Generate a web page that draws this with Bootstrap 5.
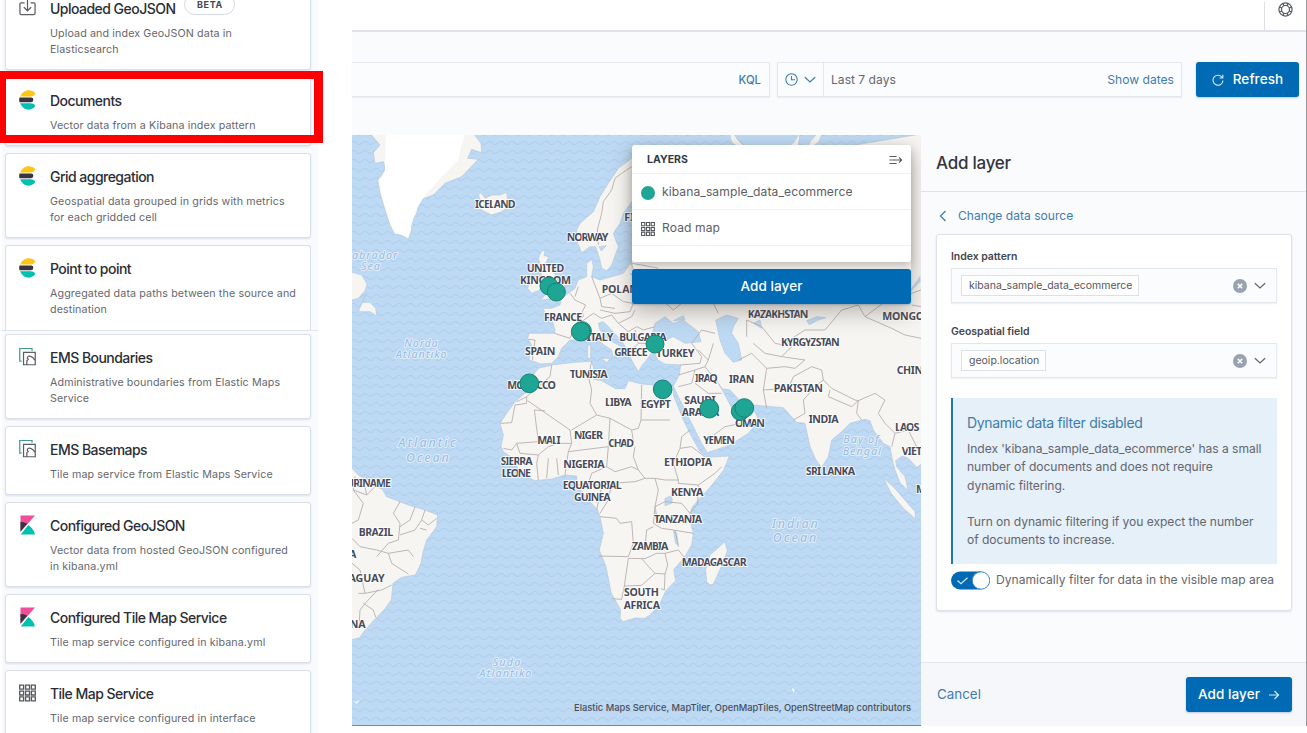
<!DOCTYPE html>
<html lang="en">
<head>
<meta charset="utf-8">
<title>Maps - Kibana</title>
<meta name="viewport" content="width=device-width, initial-scale=1">
<link href="https://cdn.jsdelivr.net/npm/bootstrap@5.3.0/dist/css/bootstrap.min.css" rel="stylesheet">
<style>
body{font-family:Inter,"Liberation Sans",sans-serif;color:#343741;background:#fff;height:733px;overflow:hidden;font-size:12.1px;line-height:1.5}
svg{display:block;flex:none}
.source-list{width:316px;height:733px;padding:0 5px 0 3px;margin-left:2px;background:#f9fafd}
.source-card{width:306px;margin-bottom:7px;border:1px solid #d9deea;border-radius:3px;box-shadow:0 1px 2px rgba(90,110,160,.18);padding:13px 8px 0 13px;background:#fff;gap:14px;height:69px;position:relative}
.source-card.tall{height:85px}
.source-card h2{font-size:14px;font-weight:500;line-height:20px;margin:0 0 6px;letter-spacing:-.53px;color:#2b2d35;white-space:nowrap}
.source-card p{font-size:10.7px;line-height:16.2px;letter-spacing:.12px;margin:0;color:#65676e;white-space:nowrap;position:relative;top:.6px}
.source-icon{width:17px;height:20px;margin-top:-1px}
.beta{font-size:9px;font-weight:700;letter-spacing:.6px;border:1px solid #d3dae6;border-radius:11px;width:51px;height:21px;line-height:20px;text-align:center;color:#444750;margin:-5px 0 0 9px}
.cut-off{height:85px;border-bottom:0;border-radius:3px 3px 0 0;margin-bottom:0;box-shadow:none}
.list-break{height:4px;margin:0 -5px 0 -3px;border-top:1px solid #dfe3ee}
.highlight{position:absolute;left:-6px;top:-7px;width:323px;height:72px;border:solid #f00;border-width:8px 9px 8px 6px;z-index:3}
.app{width:955px;height:726px;margin-left:34px;background:#fafbfd;border-right:1px solid #98999c;border-bottom:1px solid #7d8693}
.topbar{height:32px;background:#fff;border-bottom:2px solid #e0e1ea}
.help{width:42px;height:28px;border-left:1px solid #dcdee4;margin-top:2px;padding:0 0 0 13px}
.filters{height:103px;padding:30px 7px 0 0}
.field{height:35px;background:#fbfcfd;border:1px solid #e4e7ed;box-shadow:0 1px 1px rgba(60,70,100,.07)}
.query{width:418px;border-left:0;padding-right:8px;margin-right:7px;font-size:11.3px}
.dates{width:405px;margin-right:14px;padding-right:7px}
.quick{width:46px;height:33px;border-right:1px solid #e4e7ed;padding-left:7px;gap:6px}
.tlink{color:#3f7cae}
.dates span,.query{padding-top:1px}
.grey{color:#65676e}
.btn-k{background:#006bb4;color:#fff;border:0;border-radius:3px;height:35px;font-size:13.5px;font-weight:500;padding:0;box-shadow:0 1px 2px rgba(0,60,120,.25);letter-spacing:.1px}
.btn-k:hover{background:#005c9b;color:#fff}
.map{width:569px;height:590px;overflow:hidden}
.country{font:bold 32px "Noto Sans","Open Sans",sans-serif;fill:#484a59;stroke:#fff;stroke-opacity:.85;stroke-width:6px;stroke-linejoin:round;paint-order:stroke}
.sea{font:italic 500 32px "Noto Sans","Open Sans",sans-serif;fill:#9cbfe1;stroke:#e9f2fb;stroke-width:5px;stroke-linejoin:round;paint-order:stroke}
.ocean{font-size:37px}
.layers{position:absolute;left:280px;top:10px;width:279px;border-radius:3px;box-shadow:0 8px 22px rgba(80,70,60,.38)}
.layer-panel{height:117px;background:#fff;border-radius:3px;box-shadow:0 4px 8px rgba(60,60,60,.3)}
.layer-head{height:29px;padding:2px 8px 0 15px;border-bottom:1px solid #f1f2f5;font-size:10.5px;font-weight:700}
.layer-line{height:36px;padding:2px 0 0 9px;border-bottom:1px solid #f1f2f5;gap:7px;color:#5c5e66;letter-spacing:.08px}
.layer-dot{width:14px;height:14px;border-radius:50%;background:#1ea593}
.credit{position:absolute;right:10px;bottom:9px;font-size:9.3px;line-height:16px;font-weight:500;color:#4a4e5c;white-space:nowrap}
.flyout{width:385px;background:#fafbfd}
.flyout-head{height:57px;border-bottom:1px solid #dfe2e9;padding:2px 0 0 15px;font-size:17px;font-weight:500;color:#33353d;letter-spacing:-.25px}
.back{height:42px;padding:15px 0 0 18px;gap:11px}
.form-panel{width:356px;height:377px;margin-left:15px;padding:13px 14px 0;background:#fff;border:1px solid #dde1ea;border-radius:3px;box-shadow:0 1px 2px rgba(60,70,100,.15)}
.form-panel label{display:block;font-size:10.5px;font-weight:600;line-height:18px;margin-bottom:2px;color:#44464e;letter-spacing:-.05px}
.combo{height:35px;margin-bottom:20px;padding:0 10px 0 9px;gap:7px;color:#62656e}
.pill{border:1px solid #dde0e7;background:#fff;height:21px;line-height:19px;padding:0 6px 0 7px;font-size:10.5px;color:#54565e}
.note{height:166px;border-left:2px solid #2077b8;background:#e6f0f8;padding:14px 0 0 14px;color:#63666f;font-size:12.1px;letter-spacing:-.05px;line-height:18.3px;white-space:nowrap;margin-top:1px}
.note h3{font-size:14px;line-height:21px;color:#3f7cae;font-weight:400;margin:0 0 7px;letter-spacing:-.32px}
.note p{margin:0 0 18.3px}
.switch-row{gap:6px;margin-top:7px;color:#65676e}
.foot{height:64px;margin-top:51px;padding:0 14px 0 16px;background:#f6f7fb;border-top:1px solid #e2e5ec}
</style>
</head>
<body class="d-flex">
<svg width="0" height="0" class="position-absolute">
  <symbol id="elastic" viewBox="0 0 17 20"><path fill="#fec514" d="M1.300 6.500C2.800 2.600 6 .3 9.800.3c2.600 0 5 1 6.600 2.900-.8 2-2.400 3.300-4.900 3.300z"/><path fill="#343741" d="M.5 7.400h11.500a2.400 2.400 0 0 1 0 4.800H.5a9 9 0 0 1 0-4.800z"/><path fill="#00bfb3" d="M1.300 13.300h10.500c2.200 0 3.700 1 4.600 2.800a9 9 0 0 1-6.600 3.600c-3.900 0-7.100-2.500-8.500-6.400z"/></symbol>
  <symbol id="kib" viewBox="0 0 17 20"><path fill="#f04e98" d="M1.500.5H16L1.500 17z"/><path fill="#343741" d="M1.500 7c2.500 0 4.800.6 6.700 1.800L1.500 16.500z"/><path fill="#00bfb3" d="M9.300 10C12.500 12 15 15.400 16 19.500H1.800z"/></symbol>
  <symbol id="ems" viewBox="0 0 18 20"><path fill="none" stroke="#3d9b90" stroke-width="1.300" d="M2.800 14.300H.8V1h13v2.300"/><path fill="none" stroke="#5b5d64" stroke-width="1.300" d="M4.800 5h12.400v13.200H4.800zM8.300 18v-4l1.500-1.500-1-1c0-2.200 1.800-3 3.500-2.200 2 .5 3.200 1.500 4.500 4.200"/></symbol>
  <symbol id="tiles" viewBox="0 0 17 17"><path fill="none" stroke="#55575f" stroke-width="1.300" d="M.7.7h3.900v3.900H.7zM6.600.7h3.900v3.900H6.600zM12.400.7h3.900v3.900h-3.900zM.7 6.600h3.900v3.900H.7zM6.600 6.600h3.900v3.900H6.600zM12.400 6.600h3.900v3.900h-3.900zM.7 12.400h3.900v3.900H.7zM6.600 12.400h3.900v3.900H6.600zM12.400 12.400h3.900v3.900h-3.900z"/></symbol>
  <symbol id="down" viewBox="0 0 12 8"><path fill="none" stroke="currentColor" stroke-width="1.200" stroke-linecap="round" d="M1.200 1.500 6 6l4.800-4.500"/></symbol>
  <symbol id="clear" viewBox="0 0 14 14"><circle cx="7" cy="7" r="7" fill="#98a2b3"/><path stroke="#fff" stroke-width="1.600" d="m4.800 4.800 4.400 4.400m0-4.400L4.800 9.200"/></symbol>
</svg>

<aside class="source-list">
  <div class="source-card tall d-flex" style="margin-top:-15px"><svg class="source-icon" viewBox="0 0 18 20"><path fill="none" stroke="#5b5d64" stroke-width="1.300" stroke-linecap="round" d="M5.500 4.500H2.200Q1 4.500 1 6v9.500Q1 17 2.500 17h13q1.500 0 1.500-1.500V6q0-1.500-1.300-1.500h-3M9 1v11.500M5.500 9.500 9 13l3.500-3.500"/></svg><div><div class="d-flex"><h2>Uploaded GeoJSON</h2><span class="beta">BETA</span></div><p>Upload and index GeoJSON data in<br>Elasticsearch</p></div></div>
  <div class="source-card d-flex"><svg class="source-icon"><use href="#elastic"/></svg><div><h2>Documents</h2><p>Vector data from a Kibana index pattern</p></div><div class="highlight"></div></div>
  <div class="source-card tall d-flex"><svg class="source-icon"><use href="#elastic"/></svg><div><h2>Grid aggregation</h2><p>Geospatial data grouped in grids with metrics<br>for each gridded cell</p></div></div>
  <div class="source-card cut-off d-flex"><svg class="source-icon"><use href="#elastic"/></svg><div><h2>Point to point</h2><p>Aggregated data paths between the source and<br>destination</p></div></div>
  <div class="list-break"></div>
  <div class="source-card tall d-flex"><svg class="source-icon"><use href="#ems"/></svg><div><h2>EMS Boundaries</h2><p>Administrative boundaries from Elastic Maps<br>Service</p></div></div>
  <div class="source-card d-flex"><svg class="source-icon"><use href="#ems"/></svg><div><h2>EMS Basemaps</h2><p>Tile map service from Elastic Maps Service</p></div></div>
  <div class="source-card tall d-flex"><svg class="source-icon"><use href="#kib"/></svg><div><h2>Configured GeoJSON</h2><p>Vector data from hosted GeoJSON configured<br>in kibana.yml</p></div></div>
  <div class="source-card d-flex"><svg class="source-icon"><use href="#kib"/></svg><div><h2>Configured Tile Map Service</h2><p>Tile map service configured in kibana.yml</p></div></div>
  <div class="source-card d-flex"><svg class="source-icon"><use href="#tiles"/></svg><div><h2>Tile Map Service</h2><p>Tile map service configured in interface</p></div></div>
</aside>

<main class="app">
  <header class="topbar d-flex justify-content-end"><div class="help"><svg width="15" height="15" viewBox="0 0 15 15"><g fill="none" stroke="#555861" stroke-width="1.200"><circle cx="7.500" cy="7.500" r="6.600"/><circle cx="7.500" cy="7.500" r="4"/><path d="M5 1.500 6 4M10 1.500 9 4M5 13.500 6 11M10 13.500 9 11M1.500 5 4 6M1.500 10 4 9M13.500 5 11 6M13.500 10 11 9"/></g></svg></div></header>
  <section class="filters d-flex">
    <div class="field query d-flex align-items-center justify-content-end tlink fw-medium">KQL</div>
    <div class="field dates d-flex align-items-center">
      <div class="quick d-flex align-items-center tlink"><svg width="13" height="13" viewBox="0 0 13 13"><path fill="none" stroke="currentColor" stroke-width="1.100" d="M6.500.8a5.700 5.700 0 1 1 0 11.400 5.700 5.700 0 0 1 0-11.400zM6.500 3v3.700H10"/></svg><svg width="12" height="8"><use href="#down"/></svg></div>
      <span class="grey" style="padding-left:7px">Last 7 days</span><span class="tlink ms-auto">Show dates</span>
    </div>
    <button class="btn btn-k d-flex align-items-center justify-content-center" style="width:103px;gap:9px"><svg width="12" height="12" viewBox="0 0 12 12"><path fill="none" stroke="#d5e7f4" stroke-width="1.100" d="M10.500 4A5 5 0 1 0 11 6.500M10.800.8V4H7.500"/></svg>Refresh</button>
  </section>
  <div class="d-flex">
    <section class="map position-relative">
      <svg width="569" height="590" viewBox="21 15 1707 1770">
        <defs><pattern id="waves" width="34" height="27" patternUnits="userSpaceOnUse"><path d="M0 12q8.500 9 17 0t17 0" fill="none" stroke="#aecdec" stroke-width="3"/></pattern></defs>
        <path fill="#bdd9f3" d="M0 0h1760v1800H0z"/><path fill="url(#waves)" d="M0 0h1760v1800H0z"/>
        <g fill="#f7f5f2" stroke="#b5c9dd" stroke-width="2" stroke-linejoin="round">
          <path d="M75 10 105 45 85 68 90 100 115 95 122 120 98 150 105 190 120 240 133 280 148 312 170 315 190 328 200 300 198 280 215 250 225 210 265 195 300 160 350 140 400 88 368 85 380 58 410 68 408 40 385 10z"/>
          <path d="M15 425 50 435 66 462 60 482 40 505 15 512zM65 487 52 517 75 517 92 535 95 557 75 545 40 545z"/>
          <path d="M400 195 408 188 420 205 440 195 465 195 485 187 487 208 496 225 470 245 440 255 415 243 398 232 410 217z"/>
          <path d="M590 362h10l-3 15 15 3-12 22 25 20 15 33 20 10-5 25-15 15-40 3-15 4 20-22-5-30-10-20-5-40-5-15zM555 450 575 440 590 455 585 480 560 490 548 475z"/>
          <path d="M695 300 705 280 745 245 765 200 790 160 820 115 860 85 900 60 960 50 1165 60 1400 55 1500 50 1740 10V995L1715 1012 1690 985 1672 978 1652 992 1655 1010 1680 1040 1690 1082 1665 1058 1650 1020 1642 990 1635 950 1615 940 1585 900 1575 872 1560 868 1515 880 1490 905 1460 930 1450 980 1430 1012 1413 990 1395 950 1380 880 1355 877 1315 833 1225 825 1185 812 1155 780 1130 776 1145 805 1165 842 1192 848 1225 838 1237 860 1232 884 1210 910 1155 945 1087 968 1070 940 1040 880 1000 800 985 768 1003 735 1007 705 960 702 938 690 925 660 905 690 892 705 880 725 865 700 850 670 835 640 800 600 775 575 760 580 765 600 790 630 830 650 820 662 805 683 800 660 770 640 750 620 735 598 690 630 675 630 650 655 640 680 620 700 585 702 570 695 552 690 560 645 548 625 552 610 628 610 630 600 620 565 600 550 595 535 620 535 645 525 650 505 670 490 690 475 700 450 725 440 725 400 740 388 745 410 740 440 765 450 800 440 835 430 860 395 868 300 860 215 835 250 825 280 805 310 812 330 820 350 800 405 785 422 770 415 765 390 752 350 735 350 710 368 698 340z"/>
          <path d="M580 715 620 705 690 697 740 694 750 730 745 748 770 752 812 776 840 776 850 752 890 762 930 765 985 770 985 795 1015 870 1040 920 1065 965 1087 982 1153 978 1135 1022 1095 1072 1042 1130 1032 1160 1045 1210 1040 1245 1018 1282 986 1319 992 1352 962 1383 943 1425 915 1455 899 1465 870 1464 833 1475 825 1463 827 1440 799 1390 783 1310 763 1260 775 1210 765 1160 758 1140 735 1115 695 1065 695 1038 660 1035 620 1047 570 1052 545 1040 520 1017 500 982 475 965 468 950 475 915 465 880 485 850 510 815 545 785 560 740z"/>
          <path d="M1140 1235 1147 1262 1135 1296 1115 1341 1105 1362 1095 1365 1085 1355 1082 1319 1095 1274 1110 1262z"/>
          <path d="M15 1008 40 1035 110 1075 125 1100 190 1125 240 1140 278 1155 275 1190 245 1230 235 1262 228 1300 211 1335 170 1342 144 1360 139 1409 120 1436 83 1475 60 1500 44 1523 15 1530z"/>
          <path d="M1615 1045 1645 1070 1710 1145 1712 1167 1675 1135 1640 1092zM728 645h9v40h-9zM768 684l26 2-8 12zM1166 10q12 25 35 40h-20q-30-10-25-40zM1365 10h-25q-5 25-30 38h50zM1432 10l-10 25-20 15h-20l35-40zM1724 1165l10 8-4 10z"/>
        </g>
        <path fill="#fff" d="M122 10 120 120 103 155 110 195 135 280 150 308 190 322 210 245 240 195 310 120 340 90 350 45 362 10zM22 1710l10 6 13-5-10 10z"/>
        <path fill="#bdd9f3" d="M1172 10h190q-6 25-30 40h-125q-24-15-35-40zM1385 10h22l-15 38h-22z"/>
        <g fill="#bdd9f3" stroke="#b5c9dd" stroke-width="2">
          <path d="M920 620 930 580 960 560 985 580 1015 570 1060 605 1068 635 1020 640 985 620 950 635zM985 572l30-15 5 12zM1112 570 1145 555 1180 565 1165 590 1160 610 1180 640 1190 690 1165 697 1140 670 1125 630zM1385 572l30-12 28 3-25 8-25 13zM1225 580l20-10 5 25zM960 1105l20-8 2 22-22 8zM985 1200l10 10 5 35-8-5zM762 350l22-3-15 16zM1690 490l35-35v-15zM930 1130l8 35h-8z"/>
        </g>
        <g fill="none" stroke="#b8b2b1" stroke-width="2.800" stroke-linejoin="round">
          <path d="M860 110 830 130 810 145 800 180 775 215 770 250 757 300 760 345M550 628 570 630 562 690M628 610 675 625 700 570 715 560 712 545 722 525 690 510 675 490M700 470 690 500M710 575 745 550 770 565 800 555M740 440 765 505 800 490 835 515 865 520 855 545 810 550 765 540M765 505 770 530 810 535M865 520 890 500 880 450 855 430M800 555 820 580 860 560 870 540M820 580 850 605 875 590 895 600 930 590M860 400 890 405 940 415M870 600 880 640 860 660M880 640 930 640M890 500 940 500 985 540 1010 520"/>
          <path d="M860 400 870 440 920 450 960 440M940 500 945 460 985 500M1095 480 1100 510 1120 550M1040 640 1070 600 1110 610M1040 640 1070 680 1065 700 1005 705M1060 660 1090 690 1105 640M1205 620 1205 570 1250 590 1290 640 1340 650 1310 680 1260 670 1225 640M1180 690 1220 670 1265 715 1255 780M1340 650 1325 635 1380 600 1440 600 1490 540 1540 525 1560 560 1640 595 1680 615 1728 625M1310 680 1380 690 1350 715 1320 710 1265 715M1560 560 1640 500 1700 490 1728 480"/>
          <path d="M1255 780 1265 835M1255 780 1330 775 1345 740 1400 710 1430 720 1435 750 1460 775 1530 810 1540 812 1590 790 1620 810 1600 850 1620 880M1345 870 1380 850 1375 810 1410 770 1435 750M1455 780 1450 800 1520 830 1540 812M1540 812 1535 850 1550 870M1620 880 1650 910 1690 900 1720 960M1650 910 1640 950M1690 900 1720 880M1000 735 1050 720 1040 760 1000 770M1050 720 1080 710 1120 760 1130 776M1050 760 1090 790 1130 790M1100 920 1140 890 1190 880 1205 850M1180 812 1185 848M1080 710 1090 690"/>
          <path d="M620 705 615 740 580 770 545 800 515 815M545 800 545 820 510 825 500 878 465 880M548 812 675 900 680 940 640 940 580 935 568 840 600 842M740 694 730 740 740 780 735 820 755 855 680 900M755 855 795 865 860 900 865 935M890 765 888 870 975 870M888 870 880 895 860 900M795 865 790 950 670 965 680 940M580 935 515 940 500 960 475 955M515 940 525 970 580 975 610 950 640 940M580 975 575 1000 580 1050M610 985 605 1045M635 985 640 1035M670 965 660 1035M790 950 785 1010 740 1030 730 1060 695 1065M785 1010 810 1025 860 1010 880 1020 865 980 870 950M730 1060 770 1070 755 1140M880 1020 900 1045 870 1055 800 1060 790 1110 765 1150"/>
          <path d="M1035 900 1010 920 1005 955 985 1000 1000 1050 960 1050 930 1045 900 1045M1005 955 1040 950 1085 985M1130 1010 1110 1030 1060 1065 1000 1060 1000 1050M1060 1065 1058 1120 1035 1150M930 1045 940 1080 930 1130 960 1115 1010 1120 1035 1150M930 1130 925 1180 950 1195 985 1200 1045 1210M765 1160 815 1165 825 1180 860 1175 865 1240 900 1250 905 1200 925 1190M865 1240 850 1280 760 1278M850 1285 900 1286 935 1270 960 1270 1000 1260 1018 1282M850 1285 838 1368 890 1366 930 1330 960 1332 958 1380 948 1376M890 1286 920 1320 930 1330M960 1270 968 1305 960 1332M838 1368 830 1408 800 1406M990 1200 1000 1250"/>
          <path d="M30 1040 25 1080 65 1095 60 1070M65 1095 90 1070 110 1075M25 1080 55 1120 40 1170 21 1180M165 1115 145 1150 165 1180 160 1230 130 1240 95 1280M210 1130 195 1170 165 1190M240 1140 230 1170 250 1185 275 1165M230 1170 210 1200 165 1215M245 1200 225 1195M95 1260 130 1270 190 1260 205 1280M130 1270 140 1300 190 1332M21 1300 45 1320 60 1390 40 1390M60 1390 110 1380 140 1365M100 1378 65 1415 45 1440 42 1490M55 1420 85 1440 92 1462M21 1225 45 1250 95 1260M1700 525 1728 530"/>
        </g>
        <g class="country">
          <text x="390" y="233" textLength="122">ICELAND</text><text x="665" y="333" textLength="125">NORWAY</text><text x="838" y="274">FINLAND</text>
          <text x="545" y="425" textLength="113">UNITED</text><text x="525" y="463" textLength="153">KINGDOM</text><text x="770" y="489" textLength="132">POLAND</text>
          <text x="597" y="574" textLength="115">FRANCE</text><text x="725" y="632" textLength="80">ITALY</text><text x="823" y="632" textLength="142">BULGARIA</text>
          <text x="540" y="675" textLength="91">SPAIN</text><text x="808" y="679" textLength="100">GREECE</text><text x="933" y="680" textLength="115">TURKEY</text>
          <text x="1208" y="565" textLength="182">KAZAKHSTAN</text><text x="1612" y="571" textLength="175">MONGOLIA</text><text x="1308" y="647" textLength="176">KYRGYZSTAN</text><text x="1655" y="731" textLength="100">CHINA</text>
          <text x="487" y="777" textLength="146">MOROCCO</text><text x="674" y="745" textLength="114">TUNISIA</text><text x="780" y="828" textLength="80">LIBYA</text><text x="887" y="835" textLength="91">EGYPT</text>
          <text x="1050" y="755" textLength="68">IRAQ</text><text x="1152" y="759" textLength="76">IRAN</text><text x="1286" y="787" textLength="148">PAKISTAN</text><text x="1391" y="878" textLength="90">INDIA</text>
          <text x="1018" y="823" textLength="94">SAUDI</text><text x="1010" y="859" textLength="112">ARABIA</text><text x="1170" y="892" textLength="90">OMAN</text><text x="1075" y="943" textLength="95">YEMEN</text>
          <text x="1650" y="903" textLength="73">LAOS</text><text x="1670" y="976" textLength="132">VIETNAM</text><text x="1383" y="1034" textLength="147">SRI LANKA</text><text x="1713" y="1089">MALAYSIA</text>
          <text x="577" y="942" textLength="70">MALI</text><text x="687" y="928" textLength="87">NIGER</text><text x="790" y="951" textLength="77">CHAD</text><text x="467" y="1006" textLength="96">SIERRA</text><text x="470" y="1040" textLength="88">LEONE</text>
          <text x="655" y="1014" textLength="124">NIGERIA</text><text x="653" y="1078" textLength="177">EQUATORIAL</text><text x="687" y="1112" textLength="110">GUINEA</text><text x="957" y="1007" textLength="144">ETHIOPIA</text>
          <text x="978" y="1097" textLength="97">KENYA</text><text x="927" y="1178" textLength="144">TANZANIA</text><text x="861" y="1261" textLength="109">ZAMBIA</text><text x="1010" y="1308" textLength="195">MADAGASCAR</text>
          <text x="837" y="1399" textLength="105">SOUTH</text><text x="836" y="1436" textLength="109">AFRICA</text><text x="-11" y="1070" textLength="149">SURINAME</text><text x="41" y="1218" textLength="104">BRAZIL</text>
          <text x="34" y="1285" text-anchor="end">BOLIVIA</text><text x="119" y="1356" text-anchor="end">PARAGUAY</text><text x="62" y="1493" text-anchor="end">ARGENTINA</text>
        </g>
        <g class="sea">
          <text x="2" y="386" textLength="155">Labrador</text><text x="48" y="420" textLength="57">Sea</text><text x="178" y="650" textLength="100">Norda</text><text x="152" y="684" textLength="153">Atlantiko</text>
          <text x="160" y="952" textLength="171" class="ocean">Atlantic</text><text x="183" y="997" textLength="128" class="ocean">Ocean</text><text x="1495" y="940" textLength="106">Bay of</text><text x="1493" y="974" textLength="115">Bengal</text>
          <text x="1280" y="1193" textLength="138" class="ocean">Indian</text><text x="1283" y="1237" textLength="131" class="ocean">Ocean</text><text x="443" y="1608" textLength="83">Suda</text><text x="403" y="1642" textLength="156">Atlantiko</text>
        </g>
        <g fill="#1ea593" stroke="#178272" stroke-width="3"><circle cx="612" cy="468" r="27"/><circle cx="634" cy="486" r="27"/><circle cx="711" cy="603" r="28"/><circle cx="707" cy="605" r="28"/><circle cx="930" cy="642" r="27"/><circle cx="553" cy="760" r="28"/><circle cx="953" cy="778" r="28"/><circle cx="1093" cy="836" r="28"/><circle cx="1186" cy="844" r="27"/><circle cx="1198" cy="834" r="28"/></g>
        <path fill="#fff" d="m1341 1674 8 5-4 9z"/>
      </svg>
      <div class="layers">
        <div class="layer-panel">
          <div class="layer-head d-flex align-items-center justify-content-between">LAYERS<svg width="14" height="10" viewBox="0 0 14 10"><path fill="none" stroke="#555861" stroke-width="1.100" d="M.5 1.500h7M.5 5h12M.5 8.500h7M10 2.300 12.700 5 10 7.700"/></svg></div>
          <div class="layer-line d-flex align-items-center"><span class="layer-dot"></span>kibana_sample_data_ecommerce</div>
          <div class="layer-line d-flex align-items-center"><svg width="14" height="14"><use href="#tiles"/></svg>Road map</div>
        </div>
        <button class="btn btn-k w-100" style="margin-top:7px">Add layer</button>
      </div>
      <div class="credit">Elastic Maps Service, MapTiler, OpenMapTiles, OpenStreetMap contributors</div>
    </section>
    <section class="flyout">
      <div class="flyout-head d-flex align-items-center">Add layer</div>
      <div class="back d-flex tlink"><svg style="margin-top:3px" width="8" height="12" viewBox="0 0 8 12"><path fill="none" stroke="currentColor" stroke-width="1.300" d="M6.500 1 1.500 6l5 5"/></svg>Change data source</div>
      <div class="form-panel">
        <label>Index pattern</label>
        <div class="field combo d-flex align-items-center"><span class="pill">kibana_sample_data_ecommerce</span><svg class="ms-auto" width="14" height="14"><use href="#clear"/></svg><svg width="12" height="8"><use href="#down"/></svg></div>
        <label>Geospatial field</label>
        <div class="field combo d-flex align-items-center"><span class="pill">geoip.location</span><svg class="ms-auto" width="14" height="14"><use href="#clear"/></svg><svg width="12" height="8"><use href="#down"/></svg></div>
        <div class="note"><h3>Dynamic data filter disabled</h3><p>Index 'kibana_sample_data_ecommerce' has a small<br>number of documents and does not require<br>dynamic filtering.</p><p>Turn on dynamic filtering if you expect the number<br>of documents to increase.</p></div>
        <div class="switch-row d-flex align-items-center text-nowrap"><svg width="39" height="19" viewBox="0 0 39 19"><rect y=".5" width="38" height="18" rx="9" fill="#006bb4"/><circle cx="30" cy="9.500" r="8.700" fill="#fff" stroke="#3c89c2"/><path fill="none" stroke="#cfe3f2" stroke-width="1.300" d="m6.500 9.500 3.500 3.200 6.500-6"/></svg><span>Dynamically filter for data in the visible map area</span></div>
      </div>
      <div class="foot d-flex align-items-center justify-content-between"><span class="tlink" style="font-size:13.4px">Cancel</span><button class="btn btn-k d-flex align-items-center justify-content-center" style="width:106px;gap:8px">Add layer<svg width="12" height="10" viewBox="0 0 12 10"><path fill="none" stroke="#d5e7f4" stroke-width="1.200" d="M1 5h9M6.500 1l4 4-4 4"/></svg></button></div>
    </section>
  </div>
</main>
<script src="https://cdn.jsdelivr.net/npm/bootstrap@5.3.0/dist/js/bootstrap.bundle.min.js"></script>
</body>
</html>
